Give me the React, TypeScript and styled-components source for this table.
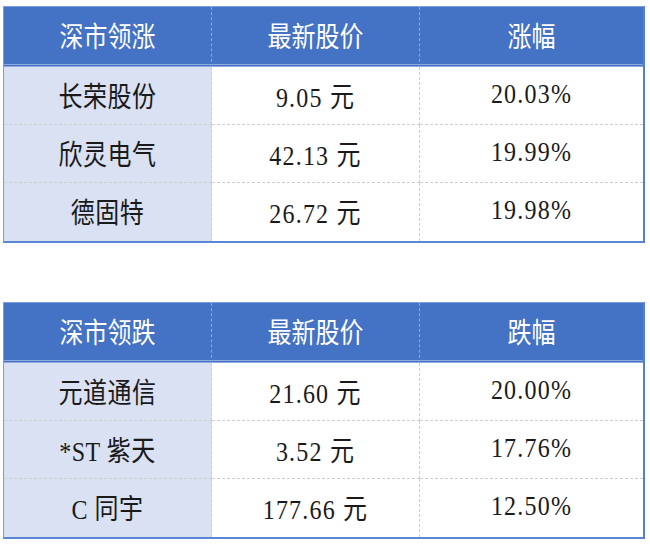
import * as React from "react";
import styled, { createGlobalStyle } from "styled-components";

const GlobalStyle = createGlobalStyle`
  html, body {
    margin: 0;
    padding: 0;
    background: #ffffff;
  }
  body {
    font-family: "Liberation Serif", "Noto Sans CJK SC", serif;
  }
`;

const Page = styled.div`
  width: 650px;
  height: 545px;
  padding: 6px 0 0 3px;
  box-sizing: border-box;
  display: flex;
  flex-direction: column;
  gap: 59px;
`;

const Table = styled.div`
  width: 642px;
  display: grid;
  grid-template-columns: 208px 208px 1fr;
  border: 1px solid #7c9ee0;
  border-right: 2px solid #4f7fd9;
  border-bottom: 2px solid #5b86d6;
  box-sizing: border-box;
`;

const HeadCell = styled.div<{ $last?: boolean }>`
  height: 55px;
  padding-bottom: 2px;
  background: #4472c4;
  color: #ffffff;
  display: flex;
  align-items: center;
  justify-content: center;
  font-size: 24px;
  border-right: ${({ $last }) => ($last ? "none" : "1px dashed #8fa8dc")};
  border-bottom: 3px double #8eaadf;
`;

const Cell = styled.div<{ $name?: boolean; $last?: boolean; $bottom?: boolean; $num?: boolean }>`
  height: ${({ $bottom }) => ($bottom ? "55px" : "54px")};
  padding-bottom: 3px;
  background: ${({ $name }) => ($name ? "#d9e1f2" : "#ffffff")};
  color: #1a1a1a;
  display: flex;
  align-items: center;
  justify-content: center;
  font-size: 24px;
  letter-spacing: ${({ $num }) => ($num ? "1.2px" : "0.5px")};
  border-right: ${({ $last }) => ($last ? "none" : "1px dashed #cfcfcf")};
  border-bottom: ${({ $bottom }) => ($bottom ? "none" : "1px dashed #cfcfcf")};
`;

const Text = styled.span`
  display: inline-block;
  transform: scaleY(1.18);
  white-space: pre;
`;

type Row = { name: string; price: string; change: string };

const gainers: Row[] = [
  { name: "长荣股份", price: "9.05 元", change: "20.03%" },
  { name: "欣灵电气", price: "42.13 元", change: "19.99%" },
  { name: "德固特", price: "26.72 元", change: "19.98%" },
];

const losers: Row[] = [
  { name: "元道通信", price: "21.60 元", change: "20.00%" },
  { name: "*ST 紫天", price: "3.52 元", change: "17.76%" },
  { name: "C 同宇", price: "177.66 元", change: "12.50%" },
];

function StockTable({ title, changeLabel, rows }: { title: string; changeLabel: string; rows: Row[] }) {
  return (
    <Table>
      <HeadCell>
        <Text>{title}</Text>
      </HeadCell>
      <HeadCell>
        <Text>最新股价</Text>
      </HeadCell>
      <HeadCell $last>
        <Text>{changeLabel}</Text>
      </HeadCell>
      {rows.map((r, i) => {
        const bottom = i === rows.length - 1;
        return (
          <React.Fragment key={r.name}>
            <Cell $name $bottom={bottom}>
              <Text>{r.name}</Text>
            </Cell>
            <Cell $num $bottom={bottom}>
              <Text>{r.price}</Text>
            </Cell>
            <Cell $num $last $bottom={bottom}>
              <Text>{r.change}</Text>
            </Cell>
          </React.Fragment>
        );
      })}
    </Table>
  );
}

export default function App() {
  return (
    <>
      <GlobalStyle />
      <Page>
        <StockTable title="深市领涨" changeLabel="涨幅" rows={gainers} />
        <StockTable title="深市领跌" changeLabel="跌幅" rows={losers} />
      </Page>
    </>
  );
}
